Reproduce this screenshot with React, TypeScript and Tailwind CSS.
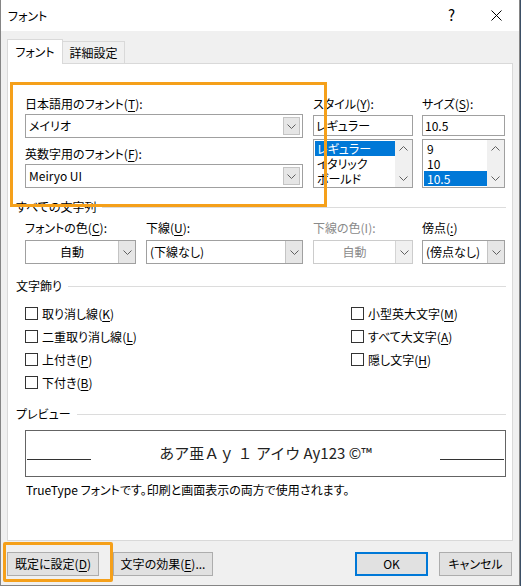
import React from 'react';

const FONT = "font-['Meiryo_UI','Noto_Sans_CJK_JP',sans-serif] [font-feature-settings:'palt']";

const Chevron = ({ up = false }: { up?: boolean }) => (
  <svg width="9" height="5" viewBox="0 0 9 5">
    <path
      d={up ? 'M0.5 4.5 L4.5 0.5 L8.5 4.5' : 'M0.5 0.5 L4.5 4.5 L8.5 0.5'}
      fill="none"
      stroke="#606060"
      strokeWidth="1"
    />
  </svg>
);

// mnemonic like (K) with the letter underlined
const Key = ({ k }: { k: string }) => (
  <>
    (<span className="underline underline-offset-[2px]">{k}</span>)
  </>
);

const EditCombo = ({ value }: { value: string }) => (
  <div className="h-[24px] border border-[#a0a0a0] bg-white flex items-center">
    <span className="flex-1 pl-[3px] text-[12px] leading-none">{value}</span>
    <div className="w-[17px] h-[18px] mr-[2px] bg-[#e6e6e6] border border-[#c4c4c4] flex items-center justify-center">
      <Chevron />
    </div>
  </div>
);

const DropList = ({ value, width, center = false, disabled = false }: { value: string; width: string; center?: boolean; disabled?: boolean }) => (
  <div className={`${width} h-[24px] border ${disabled ? 'border-[#cccccc]' : 'border-[#a0a0a0]'} bg-white flex items-stretch`}>
    <span className={`flex-1 flex items-center text-[12px] ${center ? 'justify-center' : 'pl-[3px]'} ${disabled ? 'text-[#8a8a8a]' : 'text-black'}`}>
      {value}
    </span>
    <div className={`w-[17px] border-l ${disabled ? 'border-[#d4d4d4] bg-[#f0f0f0]' : 'border-[#c4c4c4] bg-[#e6e6e6]'} flex items-center justify-center`}>
      <Chevron />
    </div>
  </div>
);

const ListBox = ({ items, selected, itemPad }: { items: string[]; selected: number; itemPad: string }) => (
  <div className="h-[49px] border border-[#a0a0a0] bg-white flex overflow-hidden">
    <div className="flex-1 pt-[1px] pl-[1px]">
      {items.map((it, i) => (
        <div
          key={it}
          className={`h-[15px] overflow-hidden flex items-center ${itemPad} text-[12px] leading-[15px] ${i === selected ? 'bg-[#0078d7] text-white' : 'text-black'}`}
        >
          {it}
        </div>
      ))}
    </div>
    <div className="w-[17px] bg-[#f0f0f0] flex flex-col items-center justify-between py-[6px]">
      <Chevron up />
      <Chevron />
    </div>
  </div>
);

const SectionHead = ({ title }: { title: string }) => (
  <div className="h-[16px] pl-[8px] pr-[6px] flex items-center gap-[6px]">
    <span className="text-[12px] leading-none text-black">{title}</span>
    <div className="flex-1 h-px bg-[#dcdcdc]" />
  </div>
);

const Check = ({ children }: { children: React.ReactNode }) => (
  <div className="h-[23px] flex items-center gap-[4px]">
    <div className="w-[13px] h-[13px] border border-[#333333] bg-white" />
    <span className="text-[12px] leading-none text-black">{children}</span>
  </div>
);

const Button = ({ children, primary = false, width }: { children: React.ReactNode; primary?: boolean; width: string }) => (
  <div
    className={`${width} h-[24px] flex items-center justify-center text-[12px] text-black bg-[#e1e1e1] ${
      primary ? 'border-2 border-[#0078d7]' : 'border border-[#adadad]'
    }`}
  >
    {children}
  </div>
);

export default function App() {
  return (
    <div className={`w-[521px] h-[586px] bg-[#3b4f66] ${FONT}`}>
      <div className="relative w-[520px] h-[586px] bg-[#f0f0f0] border-l border-r border-b border-[#858585] flex flex-col">
        {/* Title bar */}
        <div className="h-[31px] bg-white flex items-center pl-[7px] shrink-0">
          <span className="text-[12px] text-black flex-1">フォント</span>
          <span className="w-[45px] text-center text-[15px] text-black">?</span>
          <div className="w-[45px] flex items-center justify-center">
            <svg width="11" height="11" viewBox="0 0 11 11">
              <path d="M0.5 0.5 L10.5 10.5 M10.5 0.5 L0.5 10.5" stroke="#000" strokeWidth="1" />
            </svg>
          </div>
        </div>

        {/* Tabs */}
        <div className="h-[32px] pl-[6px] flex items-end shrink-0">
          <div className="w-[56px] h-[25px] bg-white border border-b-0 border-[#d9d9d9] flex items-center justify-center text-[12px] text-black relative top-px z-10">
            フォント
          </div>
          <div className="w-[62px] h-[22px] bg-[#f0f0f0] border border-l-0 border-b-0 border-[#d9d9d9] flex items-center justify-center text-[12px] text-black">
            詳細設定
          </div>
        </div>

        {/* Panel */}
        <div className="ml-[6px] mr-[6px] h-[478px] bg-white border border-[#d9d9d9] flex flex-col shrink-0">
          {/* Font selection */}
          <div className="mt-[32px] pl-[17px] flex">
            <div className="w-[278px] flex flex-col">
              <div className="h-[16px] flex items-center text-[12px] leading-none">
                日本語用のフォント<Key k="T" />:
              </div>
              <div className="mt-[2px]">
                <EditCombo value="メイリオ" />
              </div>
              <div className="mt-[8px] h-[16px] flex items-center text-[12px] leading-none">
                英数字用のフォント<Key k="F" />:
              </div>
              <div className="mt-[2px]">
                <EditCombo value="Meiryo UI" />
              </div>
            </div>
            <div className="ml-[10px] w-[100px] flex flex-col">
              <div className="h-[16px] flex items-center text-[12px] leading-none">
                スタイル<Key k="Y" />:
              </div>
              <div className="mt-[3px] h-[21px] border border-[#a0a0a0] flex items-center pl-[2px] text-[12px] leading-none">
                レギュラー
              </div>
              <div className="mt-[3px]">
                <ListBox items={['レギュラー', 'イタリック', 'ボールド']} selected={0} itemPad="pl-[2px]" />
              </div>
            </div>
            <div className="ml-[9px] w-[83px] flex flex-col">
              <div className="h-[16px] flex items-center text-[12px] leading-none">
                サイズ<Key k="S" />:
              </div>
              <div className="mt-[3px] h-[21px] border border-[#a0a0a0] flex items-center pl-[2px] text-[12px] leading-none">
                10.5
              </div>
              <div className="mt-[3px]">
                <ListBox items={['9', '10', '10.5']} selected={2} itemPad="pl-[3px]" />
              </div>
            </div>
          </div>

          {/* All text */}
          <div className="mt-[11px]">
            <SectionHead title="すべての文字列" />
          </div>
          <div className="mt-[5px] pl-[17px] flex gap-[10px]">
            <div className="w-[111px] flex flex-col">
              <div className="h-[16px] flex items-center text-[12px] leading-none">
                フォントの色<Key k="C" />:
              </div>
              <div className="mt-[4px]">
                <DropList value="自動" width="w-[111px]" center />
              </div>
            </div>
            <div className="w-[157px] flex flex-col">
              <div className="h-[16px] flex items-center text-[12px] leading-none">
                下線<Key k="U" />:
              </div>
              <div className="mt-[4px]">
                <DropList value="(下線なし)" width="w-[157px]" />
              </div>
            </div>
            <div className="w-[100px] flex flex-col">
              <div className="h-[16px] flex items-center text-[12px] leading-none text-[#8a8a8a]">下線の色(I):</div>
              <div className="mt-[4px]">
                <DropList value="自動" width="w-[100px]" center disabled />
              </div>
            </div>
            <div className="ml-[-1px] w-[83px] flex flex-col">
              <div className="h-[16px] flex items-center text-[12px] leading-none">
                傍点<Key k=":" />
              </div>
              <div className="mt-[4px]">
                <DropList value="(傍点なし)" width="w-[83px]" />
              </div>
            </div>
          </div>

          {/* Effects */}
          <div className="mt-[14px]">
            <SectionHead title="文字飾り" />
          </div>
          <div className="mt-[8px] pl-[17px] flex">
            <div className="w-[326px] flex flex-col">
              <Check>
                取り消し線<Key k="K" />
              </Check>
              <Check>
                二重取り消し線<Key k="L" />
              </Check>
              <Check>
                上付き<Key k="P" />
              </Check>
              <Check>
                下付き<Key k="B" />
              </Check>
            </div>
            <div className="flex flex-col">
              <Check>
                小型英大文字<Key k="M" />
              </Check>
              <Check>
                すべて大文字<Key k="A" />
              </Check>
              <Check>
                隠し文字<Key k="H" />
              </Check>
            </div>
          </div>

          {/* Preview */}
          <div className="mt-[12px]">
            <SectionHead title="プレビュー" />
          </div>
          <div className="mt-[8px] ml-[17px] mr-[6px] h-[47px] border border-[#646464] flex items-center px-[1px]">
            <div className="w-[64px] h-px bg-[#333333] mt-[12px]" />
            <div className="flex-1 text-center text-[15px] text-[#222222] [font-feature-settings:normal]">
              あア亜Ａｙ １ アイウ Ay123 ©™
            </div>
            <div className="w-[64px] h-px bg-[#333333] mt-[12px]" />
          </div>
          <div className="mt-[5px] pl-[18px] h-[16px] flex items-center text-[12px] leading-none text-black">
            TrueType フォントです。印刷と画面表示の両方で使用されます。
          </div>
        </div>

        {/* Buttons */}
        <div className="mt-[11px] pl-[6px] pr-[7px] flex items-center">
          <Button width="w-[92px]">
            既定に設定<Key k="D" />
          </Button>
          <div className="ml-[14px]">
            <Button width="w-[100px]">
              文字の効果<Key k="E" />...
            </Button>
          </div>
          <div className="flex-1" />
          <Button width="w-[73px]" primary>
            OK
          </Button>
          <div className="ml-[11px]">
            <Button width="w-[73px]">キャンセル</Button>
          </div>
        </div>

        {/* Orange highlight annotations */}
        <div className="absolute left-[9px] top-[82px] w-[317px] h-[125px] border-[3px] border-[#f5a01a] pointer-events-none" />
        <div className="absolute left-[2px] top-[542px] w-[110px] h-[40px] border-[3px] border-[#f5a01a] rounded-[2px] pointer-events-none" />
      </div>
    </div>
  );
}
